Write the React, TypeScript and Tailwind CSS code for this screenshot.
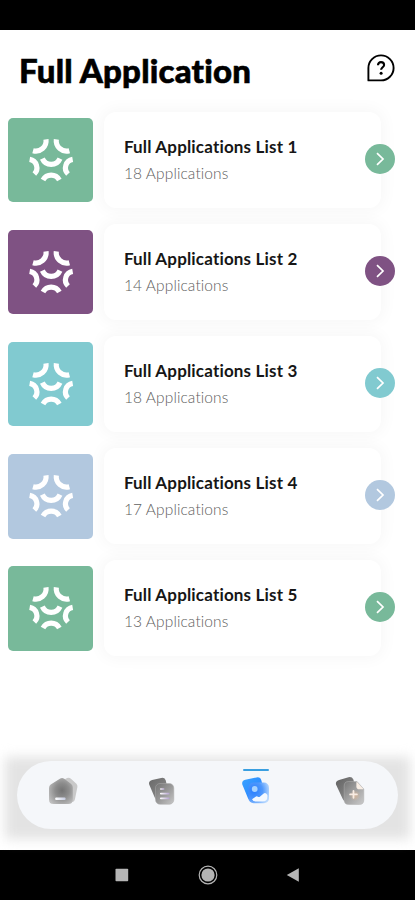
import { FC } from "react";

interface ListItem {
    title: string;
    count: number;
    color: string;
}

const lists: ListItem[] = [
    { title: "Full Applications List 1", count: 18, color: "bg-[#78b99a]" },
    { title: "Full Applications List 2", count: 14, color: "bg-[#7f5283]" },
    { title: "Full Applications List 3", count: 18, color: "bg-[#81cad0]" },
    { title: "Full Applications List 4", count: 17, color: "bg-[#b2c8df]" },
    { title: "Full Applications List 5", count: 13, color: "bg-[#78b99a]" },
];

const HelpIcon: FC = () => (
    <svg className="size-7" viewBox="0 0 28 28" fill="none" stroke="#000">
        <path
            d="M1.4 26.4V13.9A12.6 12.5 0 1 1 14 26.4Z"
            strokeWidth="1.9"
            strokeLinejoin="round"
        />
        <path
            d="M11 11.2c0-1.9 1.2-3.1 3-3.1s3.1 1.1 3.1 2.8c0 2.3-3 2.4-3 4.9"
            strokeWidth="2.1"
        />
        <circle cx="14.1" cy="19.2" r="1.5" fill="#000" stroke="none" />
    </svg>
);

const ArcsIcon: FC = () => (
    <svg
        className="size-15"
        viewBox="2 0 180 180"
        fill="none"
        stroke="#fff"
        strokeWidth="15.5"
    >
        <path d="M77 28A31 31 0 0 1 38 62" />
        <path d="M108 28A31 31 0 0 0 147 62" />
        <path d="M66 86A29 29 0 0 0 119 86" />
        <path d="M28 88A26 26 0 0 1 42 132" />
        <path d="M157 88A26 26 0 0 0 143 132" />
        <path d="M68 150A28 28 0 0 1 117 150" />
    </svg>
);

const HomeIcon: FC = () => (
    <svg className="size-8" viewBox="0 0 32 32">
        <defs>
            <radialGradient id="home" cx=".55" cy=".48" r=".65">
                <stop stopColor="#747474" />
                <stop offset=".45" stopColor="#8d8d8d" />
                <stop offset="1" stopColor="#c0c0c0" />
            </radialGradient>
            <linearGradient id="homeLine">
                <stop stopColor="#fff" />
                <stop offset="1" stopColor="#c5cbe0" />
            </linearGradient>
        </defs>
        <path
            d="M20 4.1q2.2-1 4.2.9l5.2 4.8q1.3 1.4 1 3.2l-2.4 12q-.6 3-3 3H12V9Z"
            fill="#c9c9c9"
        />
        <path
            d="M12.9 4.8q2.2-1.5 4.3 0l7 5.2q1.6 1.3 1.6 3.3v12.2q0 4.5-4.5 4.5H6.5Q2 30 2 25.5V14q0-2.2 1.7-3.5Z"
            fill="url(#home)"
        />
        <rect x="8.2" y="23.4" width="10.4" height="2.7" rx="1" fill="url(#homeLine)" />
    </svg>
);

const DocumentIcon: FC = () => (
    <svg className="size-8" viewBox="0 0 32 32">
        <defs>
            <linearGradient id="docBack" x2="1" y2="1">
                <stop stopColor="#696969" />
                <stop offset="1" stopColor="#919191" />
            </linearGradient>
            <linearGradient id="docFront" x2="1" y2="1">
                <stop stopColor="#737373" />
                <stop offset=".5" stopColor="#999" />
                <stop offset="1" stopColor="#c7c7c7" />
            </linearGradient>
            <linearGradient id="docLine">
                <stop stopColor="#fff" />
                <stop offset="1" stopColor="#b3a0cf" />
            </linearGradient>
        </defs>
        <path
            d="M5.1 6.1 14.2 4q3.3-.7 4.5 2.3L22 21l-9.5 5q-3.8.3-5-3L2.2 10.6Q1.2 7.1 5.1 6.1Z"
            fill="url(#docBack)"
        />
        <rect x="8.5" y="9.5" width="18.3" height="20.8" rx="4.5" fill="url(#docFront)" stroke="#aaa" strokeWidth=".5" />
        <g fill="url(#docLine)">
            <rect x="13" y="14.2" width="4.5" height="1.5" rx=".7" />
            <rect x="13" y="18.8" width="9.5" height="1.7" rx=".8" />
            <rect x="13" y="23.6" width="9.5" height="1.7" rx=".8" />
        </g>
    </svg>
);

const GalleryIcon: FC = () => (
    <svg className="size-8" viewBox="0 0 32 32">
        <defs>
            <linearGradient id="galBack" x2="1" y2="1">
                <stop stopColor="#39a3ff" />
                <stop offset="1" stopColor="#257aff" />
            </linearGradient>
            <radialGradient id="galFront" cx=".25" cy=".4" r=".8">
                <stop stopColor="#287eff" />
                <stop offset=".55" stopColor="#4f98fc" />
                <stop offset="1" stopColor="#b9d9ff" />
            </radialGradient>
        </defs>
        <path
            d="M5.3 5.7 16.5 3.4q3.8-.8 4.9 3L25 21l-10 6q-5 1-7.1-3L2.3 10.5Q1.5 6.6 5.3 5.7Z"
            fill="url(#galBack)"
        />
        <rect x="8.5" y="8.5" width="20.5" height="20.8" rx="5" fill="url(#galFront)" />
        <circle cx="14.7" cy="15" r="2.9" fill="#a6d2ff" />
        <path
            d="M12 25.3l3.3-2.4q1.3-1 2.6-.2 1.2.9 2.5-.5l3-2.5q2.2-1.6 4 1.2.7 6.7-4.6 6.7h-7q-2.8 0-3.8-2.3Z"
            fill="#f4f9ff"
        />
    </svg>
);

const AddFileIcon: FC = () => (
    <svg className="size-8" viewBox="0 0 32 32">
        <defs>
            <linearGradient id="addBack" x2="1" y2="1">
                <stop stopColor="#616161" />
                <stop offset="1" stopColor="#999" />
            </linearGradient>
            <linearGradient id="addFront" x2="1" y2="1">
                <stop stopColor="#777" />
                <stop offset=".5" stopColor="#a3a3a3" />
                <stop offset="1" stopColor="#cacaca" />
            </linearGradient>
            <radialGradient id="addGlow">
                <stop stopColor="#e3b994" stopOpacity=".75" />
                <stop offset="1" stopColor="#e3b994" stopOpacity="0" />
            </radialGradient>
        </defs>
        <path
            d="M4.1 6 13.5 3.2q3.4-.8 4.9 2.3L22 20l-8.5 8q-4.5.2-6-3.5L1 10.5Q.2 7.2 4.1 6Z"
            fill="url(#addBack)"
        />
        <path
            d="M13.7 7.5H22l6.8 7.5v11q0 4.5-4.5 4.5H13.7q-4.5 0-4.5-4.5V12q0-4.5 4.5-4.5Z"
            fill="url(#addFront)"
            stroke="#b0b0b0"
            strokeWidth=".5"
        />
        <circle cx="20" cy="21.5" r="5.5" fill="url(#addGlow)" />
        <path d="M21.4 8.5q0-1 .9-.3l5.8 6.2q.7.8-.3.8h-3.5q-2.9 0-2.9-2.8Z" fill="#f8eee5" />
        <path d="M18.5 17v6.8M15.1 20.4h6.8" stroke="#f8ece3" strokeWidth="1.8" strokeLinecap="round" />
    </svg>
);

const ListRow: FC<{ item: ListItem }> = ({ item }) => (
    <li className="flex h-24 items-center">
        <div
            className={`flex h-[84.5px] w-[84.5px] items-center justify-center rounded-[5px] ${item.color}`}
        >
            <ArcsIcon />
        </div>
        <div className="relative ml-[11px] flex h-24 w-[277px] flex-col rounded-xl bg-white pt-[23px] pl-5 shadow-[0_0_16px_3px_rgba(0,0,0,0.035)]">
            <h2 className="text-[17px] leading-6 font-bold tracking-[0.17px] whitespace-nowrap text-[#161616]">
                {item.title}
            </h2>
            <p className="mt-0.5 text-[15.5px] leading-6 font-light tracking-[0.1px] whitespace-nowrap text-[#606060]">
                {item.count} Applications
            </p>
            <button
                className={`absolute top-8 -right-3.5 flex size-[30px] items-center justify-center rounded-full ${item.color}`}
            >
                <svg className="size-4" viewBox="0 0 16 16" fill="none" stroke="#fff" strokeWidth="1.7">
                    <path d="m5 2.2 6 5.8-6 5.8" />
                </svg>
            </button>
        </div>
    </li>
);

const App: FC = () => {
    return (
        <div className="flex h-[900px] w-[415px] flex-col overflow-hidden bg-white font-['Lato',sans-serif] [font-variant-ligatures:none]">
            <div className="h-[30px] shrink-0 bg-black" />
            <header className="flex h-[82px] shrink-0 items-start justify-between pr-5 pl-[19px]">
                <h1 className="mt-[19px] text-[33px] leading-[42px] font-black tracking-[0.2px] whitespace-nowrap text-black [-webkit-text-stroke:0.6px_#000]">
                    Full Application
                </h1>
                <div className="mt-6">
                    <HelpIcon />
                </div>
            </header>
            <ul className="flex flex-col gap-[16.1px] pl-[8.4px]">
                {lists.map(item => (
                    <ListRow key={item.title} item={item} />
                ))}
            </ul>
            <div className="relative mt-auto mb-[21px] px-[17px]">
                <div className="absolute inset-x-[5px] -top-1 -bottom-2.5 bg-[#e3e3e3] blur-[6px]" />
                <nav className="relative flex h-[68px] items-start rounded-full bg-[#f5f7fa] pt-[13px] pl-[29.5px]">
                    <HomeIcon />
                    <div className="ml-[68.5px]">
                        <DocumentIcon />
                    </div>
                    <div className="relative ml-[61px]">
                        <div className="absolute -top-[5px] left-[3px] h-0.5 w-[26px] rounded-full bg-[#3a9fe0]" />
                        <GalleryIcon />
                    </div>
                    <div className="ml-[63px]">
                        <AddFileIcon />
                    </div>
                </nav>
            </div>
            <footer className="flex h-[50px] shrink-0 items-center justify-center bg-black">
                <svg className="h-5 w-[190px]" viewBox="0 0 190 20" fill="#b5b5b5">
                    <rect x="2.5" y="3.8" width="12.7" height="12.5" rx=".8" />
                    <circle cx="95" cy="10" r="8.8" fill="none" stroke="#b5b5b5" strokeWidth="1.2" />
                    <circle cx="95" cy="10" r="6.6" />
                    <path d="M173.8 10 185.8 3.2V16.8Z" />
                </svg>
            </footer>
        </div>
    );
};

export default App;
